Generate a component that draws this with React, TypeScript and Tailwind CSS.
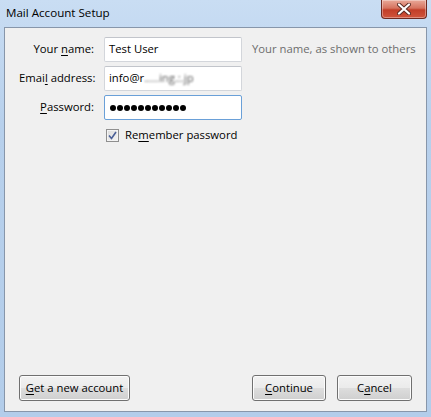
const font = "font-['Open_Sans','Noto_Sans',sans-serif]";

function Key({ children }: { children: string }) {
  return <span className="underline underline-offset-2">{children}</span>;
}

function CloseButton() {
  return (
    <div className="absolute right-[4px] top-0 flex h-[19px] w-[46px] items-center justify-center rounded-b-[4px] border border-t-0 border-[#6e2a21] bg-[linear-gradient(180deg,#e9a999_0%,#d6735f_45%,#c23e28_55%,#d0553c_100%)] shadow-[inset_0_0_0_1px_rgba(255,255,255,0.35)]">
      <svg width="14" height="12" viewBox="0 0 14 12">
        <path
          d="M2 1.5 L12 10.5 M12 1.5 L2 10.5"
          stroke="#5a2a22"
          strokeWidth="4"
          strokeLinecap="round"
        />
        <path
          d="M2 1.5 L12 10.5 M12 1.5 L2 10.5"
          stroke="#ffffff"
          strokeWidth="2.2"
          strokeLinecap="round"
        />
      </svg>
    </div>
  );
}

function Field({
  children,
  focused = false,
}: {
  children: React.ReactNode;
  focused?: boolean;
}) {
  return (
    <div
      className={
        "flex h-[25px] w-[138px] items-center rounded-[2px] border bg-white px-[4px] text-black " +
        (focused
          ? "border-[#6aa0d8]"
          : "border-[#d3d6db] border-t-[#c2c5cb]")
      }
    >
      {children}
    </div>
  );
}

function Button({ children, width }: { children: React.ReactNode; width: string }) {
  return (
    <button
      type="button"
      className={
        "flex h-[26px] items-center justify-center rounded-[3px] border border-[#707070] bg-[linear-gradient(180deg,#f2f2f2_0%,#ebebeb_48%,#dddddd_52%,#cfcfcf_100%)] text-black shadow-[inset_0_0_0_1px_#fcfcfc] " +
        width
      }
    >
      {children}
    </button>
  );
}

export default function App() {
  return (
    <div
      className={
        "relative flex h-[417px] w-[431px] flex-col overflow-hidden bg-[linear-gradient(180deg,#c9ddf3_0%,#b7d0ec_30%,#b3cdea_100%)] text-[11.3px] " +
        font
      }
    >
      <CloseButton />
      <div className="flex h-[27px] shrink-0 items-center pl-[6px] pb-[1px] text-[11.6px] text-black">
        Mail Account Setup
      </div>
      <div className="mx-[4px] mb-[5px] flex flex-1 flex-col border border-[#8796aa] bg-[#f0f0f0] px-[14px] pb-[10px] pt-[9px]">
        <div className="grid grid-cols-[75px_138px_auto] items-center gap-x-[10px] gap-y-[4px] text-black">
          <div className="text-right">
            Your <Key>n</Key>ame:
          </div>
          <Field>Test User</Field>
          <div className="whitespace-nowrap text-[#6d6d6d]">Your name, as shown to others</div>

          <div className="whitespace-nowrap text-right">
            Emai<Key>l</Key> address:
          </div>
          <Field>
            <span>info@r</span>
            <span className="blur-[0.8px] text-[#555]">.....ing.:.jp</span>
          </Field>
          <div />

          <div className="text-right">
            <Key>P</Key>assword:
          </div>
          <Field focused>
            <div className="flex gap-[1px] pl-[1px]">
              {Array.from({ length: 11 }, (_, i) => (
                <span key={i} className="h-[6px] w-[6px] rounded-full bg-black" />
              ))}
            </div>
          </Field>
          <div />
        </div>

        <div className="mt-[7px] flex items-center gap-[6px] pl-[87px] text-black">
          <span className="flex h-[13px] w-[13px] items-center justify-center border border-[#8f8f8f] bg-[linear-gradient(135deg,#dcdcdc_0%,#f4f4f4_100%)] shadow-[inset_0_0_0_1px_#f4f4f4]">
            <svg width="9" height="9" viewBox="0 0 9 9">
              <path
                d="M1 4.5 L3.5 7.5 L8 1"
                fill="none"
                stroke="#4a5f97"
                strokeWidth="1.6"
              />
            </svg>
          </span>
          <span>
            Re<Key>m</Key>ember password
          </span>
        </div>

        <div className="mt-auto flex items-center">
          <Button width="w-[111px]">
            <span>
              <Key>G</Key>et a new account
            </span>
          </Button>
          <div className="ml-auto flex gap-[11px]">
            <Button width="w-[74px]">
              <span>
                <Key>C</Key>ontinue
              </span>
            </Button>
            <Button width="w-[75px]">
              <span>
                C<Key>a</Key>ncel
              </span>
            </Button>
          </div>
        </div>
      </div>
    </div>
  );
}
